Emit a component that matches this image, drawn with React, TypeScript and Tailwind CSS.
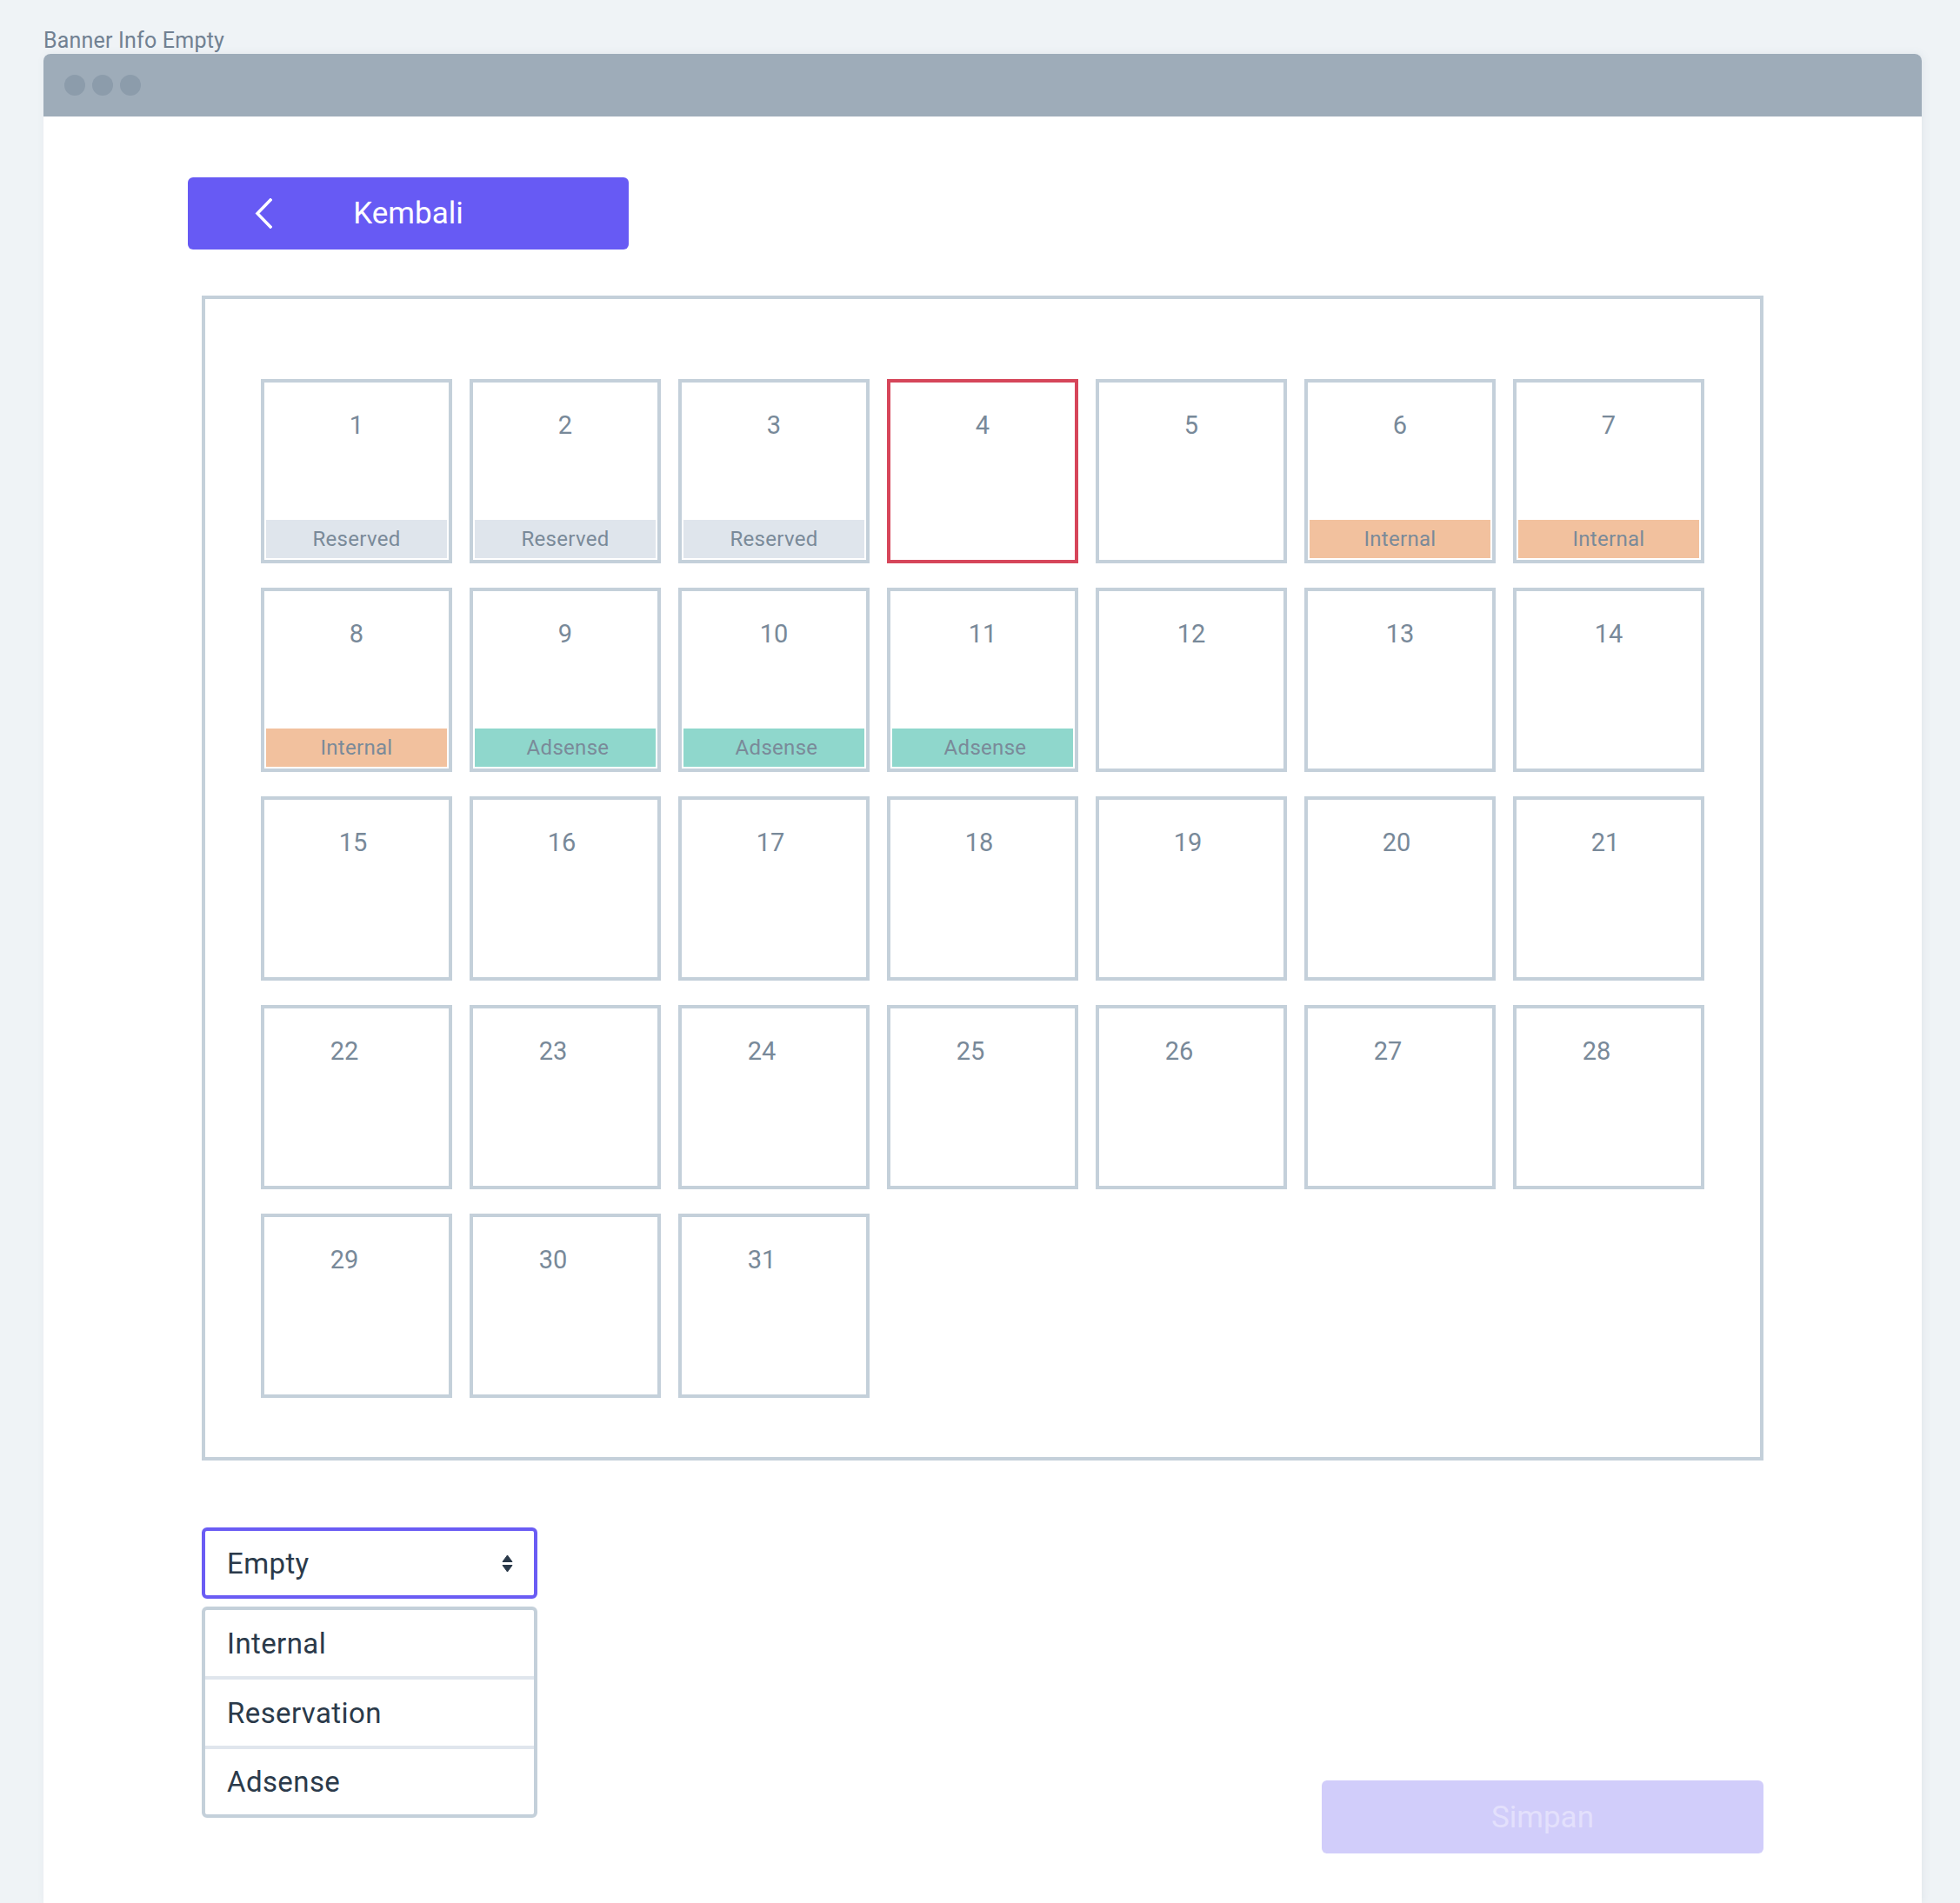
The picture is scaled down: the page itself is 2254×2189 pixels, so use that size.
import { ReactNode } from 'react';

type Tag = 'reserved' | 'internal' | 'adsense';

const tags: Record<number, Tag> = {
  1: 'reserved',
  2: 'reserved',
  3: 'reserved',
  6: 'internal',
  7: 'internal',
  8: 'internal',
  9: 'adsense',
  10: 'adsense',
  11: 'adsense',
};

const tagStyles: Record<Tag, { label: string; className: string }> = {
  reserved: { label: 'Reserved', className: 'bg-[#dfe5ec]' },
  internal: { label: 'Internal', className: 'bg-[#f2c19e]' },
  adsense: { label: 'Adsense', className: 'bg-[#8fd7cc] pl-[6px]' },
};

const days = Array.from({ length: 31 }, (_, i) => i + 1);

function numberShift(day: number) {
  if (day >= 22) return '-translate-x-[14px]';
  if (day >= 15) return '-translate-x-[4px]';
  return '';
}

function DayCell({ day }: { day: number }) {
  const tag = tags[day];
  const selected = day === 4;
  return (
    <div
      className={`flex h-[212px] w-[220px] flex-col border-4 p-[2px] ${
        selected ? 'border-[#d6465a]' : 'border-[#c4d0da]'
      }`}
    >
      <p
        className={`pt-[33px] text-center text-[29px] leading-none text-[#788999] ${numberShift(day)}`}
      >
        {day}
      </p>
      {tag && (
        <div
          className={`mt-auto flex h-[44px] items-center justify-center text-[24px] leading-none tracking-[0.3px] text-[#7a8a99] ${tagStyles[tag].className}`}
        >
          {tagStyles[tag].label}
        </div>
      )}
    </div>
  );
}

function Option({ children, last }: { children: ReactNode; last?: boolean }) {
  return (
    <div
      className={`flex items-center px-[25px] text-[33px] leading-none tracking-[0.4px] text-[#2b3a4a] ${
        last ? 'h-[75px]' : 'h-[80px] border-b-4 border-[#e0e6ed]'
      }`}
    >
      {children}
    </div>
  );
}

export default function App() {
  return (
    <div className="flex h-[2189px] w-full flex-col overflow-hidden bg-[#eff3f6] pl-[50px] pr-[44px] pt-[34px] font-[Roboto,sans-serif]">
      <p className="h-[25px] text-[25px] leading-none tracking-[0.2px] text-[#718192]">Banner Info Empty</p>

      <div className="mt-[3px] flex flex-1 flex-col rounded-t-[8px] bg-white shadow-[2px_0_10px_rgba(110,130,150,0.10)]">
        {/* title bar */}
        <div className="flex h-[72px] items-center gap-[8px] rounded-t-[8px] bg-[#9eacb9] pl-[24px]">
          <span className="h-[24px] w-[24px] rounded-full bg-[#8c9cab]" />
          <span className="h-[24px] w-[24px] rounded-full bg-[#8c9cab]" />
          <span className="h-[24px] w-[24px] rounded-full bg-[#8c9cab]" />
        </div>

        <div className="flex flex-col">
          <button className="ml-[166px] mt-[70px] grid h-[83px] w-[507px] grid-cols-[1fr_auto_1fr] items-center rounded-[6px] bg-[#675af4] text-white">
            <span className="justify-self-start pl-[77px]">
              <svg width="20" height="35" viewBox="0 0 20 35" fill="none">
                <polyline
                  points="18,2 3,17.5 18,33"
                  stroke="white"
                  strokeWidth="3.5"
                  strokeLinecap="square"
                />
              </svg>
            </span>
            <span className="text-[35px] leading-none">Kembali</span>
            <span />
          </button>

          <div className="ml-[182px] mt-[53px] h-[1340px] w-[1796px] border-4 border-[#c4d0da] pl-[64px] pt-[92px]">
            <div className="grid grid-cols-[repeat(7,220px)] gap-x-[20px] gap-y-[28px]">
              {days.map((d) => (
                <DayCell key={d} day={d} />
              ))}
            </div>
          </div>

          <div className="ml-[182px] mt-[77px] flex w-[1796px] items-start justify-between">
            <div className="flex w-[386px] flex-col gap-[9px]">
              <div className="flex h-[82px] items-center justify-between rounded-[6px] border-4 border-[#6a5cf4] pl-[25px] pr-[24px]">
                <span className="text-[33px] leading-none tracking-[0.4px] text-[#2b3a4a]">Empty</span>
                <svg width="13" height="21" viewBox="0 0 13 21">
                  <path d="M6.5 1 L12 8.5 H1 Z" fill="#2b3a4a" stroke="#2b3a4a" strokeLinejoin="round" />
                  <path d="M1 12.5 H12 L6.5 20 Z" fill="#2b3a4a" stroke="#2b3a4a" strokeLinejoin="round" />
                </svg>
              </div>
              <div className="flex flex-col rounded-[6px] border-4 border-[#c4d0da]">
                <Option>Internal</Option>
                <Option>Reservation</Option>
                <Option last>Adsense</Option>
              </div>
            </div>

            <button className="mt-[291px] h-[84px] w-[508px] rounded-[6px] bg-[#d1cdfa] text-[35px] leading-none text-[#e3e0fc]">
              Simpan
            </button>
          </div>
        </div>
      </div>
    </div>
  );
}
